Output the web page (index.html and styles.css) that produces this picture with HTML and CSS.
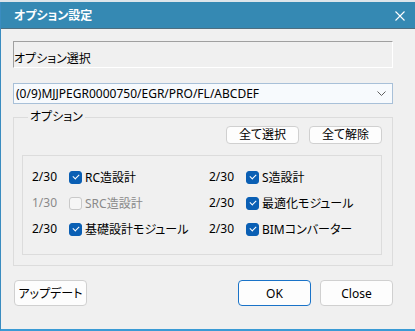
FILE: index.html
```html
<!DOCTYPE html>
<html lang="ja">
<head>
  <meta charset="UTF-8">
  <title>オプション設定</title>
  <link rel="stylesheet" href="styles.css">
</head>
<body>
  <div class="window">
    <div class="titlebar">
      <span class="title">オプション設定</span>
      <svg class="close" width="10" height="10" viewBox="0 0 10 10">
        <path d="M0.5 0.5 L9.5 9.5 M9.5 0.5 L0.5 9.5" stroke="#fff" stroke-width="1.1" fill="none"/>
      </svg>
    </div>

    <div class="content">
      <div class="label-box">オプション選択</div>

      <div class="combo">
        <span class="combo-text">(0/9)MJJPEGR0000750/EGR/PRO/FL/ABCDEF</span>
        <svg class="chevron" width="9" height="5" viewBox="0 0 9 5">
          <path d="M0.5 0.5 L4.5 4.5 L8.5 0.5" stroke="#5f5f5f" stroke-width="1" fill="none"/>
        </svg>
      </div>

      <fieldset class="group">
        <legend>オプション</legend>
        <div class="group-actions">
          <button class="btn btn-small" type="button">全て選択</button>
          <button class="btn btn-small" type="button">全て解除</button>
        </div>
        <div class="options">
          <div class="option">
            <span class="count">2/30</span>
            <span class="check on"></span>
            <span class="name">RC造設計</span>
          </div>
          <div class="option">
            <span class="count">2/30</span>
            <span class="check on"></span>
            <span class="name">S造設計</span>
          </div>
          <div class="option disabled">
            <span class="count">1/30</span>
            <span class="check"></span>
            <span class="name">SRC造設計</span>
          </div>
          <div class="option">
            <span class="count">2/30</span>
            <span class="check on"></span>
            <span class="name">最適化モジュール</span>
          </div>
          <div class="option">
            <span class="count">2/30</span>
            <span class="check on"></span>
            <span class="name">基礎設計モジュール</span>
          </div>
          <div class="option">
            <span class="count">2/30</span>
            <span class="check on"></span>
            <span class="name">BIMコンバーター</span>
          </div>
        </div>
      </fieldset>

      <div class="footer">
        <button class="btn" type="button">アップデート</button>
        <div class="footer-right">
          <button class="btn btn-primary" type="button">OK</button>
          <button class="btn" type="button">Close</button>
        </div>
      </div>
    </div>
  </div>
</body>
</html>
```

FILE: styles.css
```css
* {
  margin: 0;
  padding: 0;
  box-sizing: border-box;
  font-family: "Noto Sans", "Noto Sans CJK JP", sans-serif;
  font-feature-settings: "palt";
}

body {
  background-color: #dde5ea;
  width: 415px;
  height: 331px;
  overflow: hidden;
}

.window {
  margin-top: 2px;
  height: 329px;
  background: #f0f0f0;
  border-left: 1px solid #3a8cc0;
  border-bottom: 2px solid #3a9bd5;
}

.titlebar {
  height: 27px;
  background: #3589b3;
  border-bottom: 1px solid #4e6e80;
  display: flex;
  align-items: center;
  justify-content: space-between;
  padding: 0 10px 0 13px;
}

.title {
  color: #fff;
  font-weight: bold;
  font-size: 12px;
}

.close {
  margin-top: 1px;
}

.content {
  padding: 12px 22px 0 12px;
}

.label-box {
  height: 27px;
  border-top: 1px solid #a0a0a0;
  border-left: 1px solid #a0a0a0;
  border-right: 1px solid #fff;
  border-bottom: 1px solid #fff;
  font-size: 12px;
  line-height: 14px;
  padding: 10px 0 0 0;
  color: #000;
}

.combo {
  margin-top: 15px;
  height: 21px;
  border: 1px solid #a8c0d8;
  background: #f7fafd;
  display: flex;
  align-items: center;
  justify-content: space-between;
  padding: 0 6px 0 2px;
}

.combo-text {
  font-size: 12px;
  color: #000;
}

.group {
  margin-top: 6px;
  border: 1px solid #dcdcdc;
  padding: 2px 10px 10px 8px;
}

.group legend {
  font-size: 12px;
  line-height: 14px;
  margin-left: 6px;
  padding: 0 2px;
  color: #000;
}

.group-actions {
  display: flex;
  justify-content: flex-end;
  gap: 10px;
}

.btn {
  background: #fdfdfd;
  border: 1px solid #d0d0d0;
  border-radius: 4px;
  font-size: 12px;
  color: #000;
  width: 73px;
  height: 26px;
}

.btn-small {
  height: 18px;
  line-height: 14px;
}

.btn-primary {
  border-color: #1a73c8;
}

.options {
  margin-top: 11px;
  border: 1px solid #dcdcdc;
  padding: 8px 0 12px 9px;
  display: grid;
  grid-template-columns: 177px 1fr;
  grid-auto-rows: 26px;
}

.option {
  display: flex;
  align-items: center;
  font-size: 12px;
  color: #000;
}

.count {
  width: 37px;
  margin-top: -2px;
}

.check {
  width: 13px;
  height: 13px;
  border-radius: 3px;
  border: 1px solid #c9c9c9;
  background: #f6f6f6;
  margin-right: 3px;
  position: relative;
}

.check.on {
  background: #0a5fb4;
  border-color: #0a5fb4;
}

.check.on::after {
  content: "";
  position: absolute;
  left: 3px;
  top: 2px;
  width: 5px;
  height: 3px;
  border-left: 1px solid #fff;
  border-bottom: 1px solid #fff;
  transform: rotate(-45deg);
}

.option.disabled {
  color: #8a8a8a;
}

.footer {
  margin-top: 14px;
  display: flex;
  justify-content: space-between;
  padding-left: 1px;
}

.footer-right {
  display: flex;
  gap: 9px;
}
```
